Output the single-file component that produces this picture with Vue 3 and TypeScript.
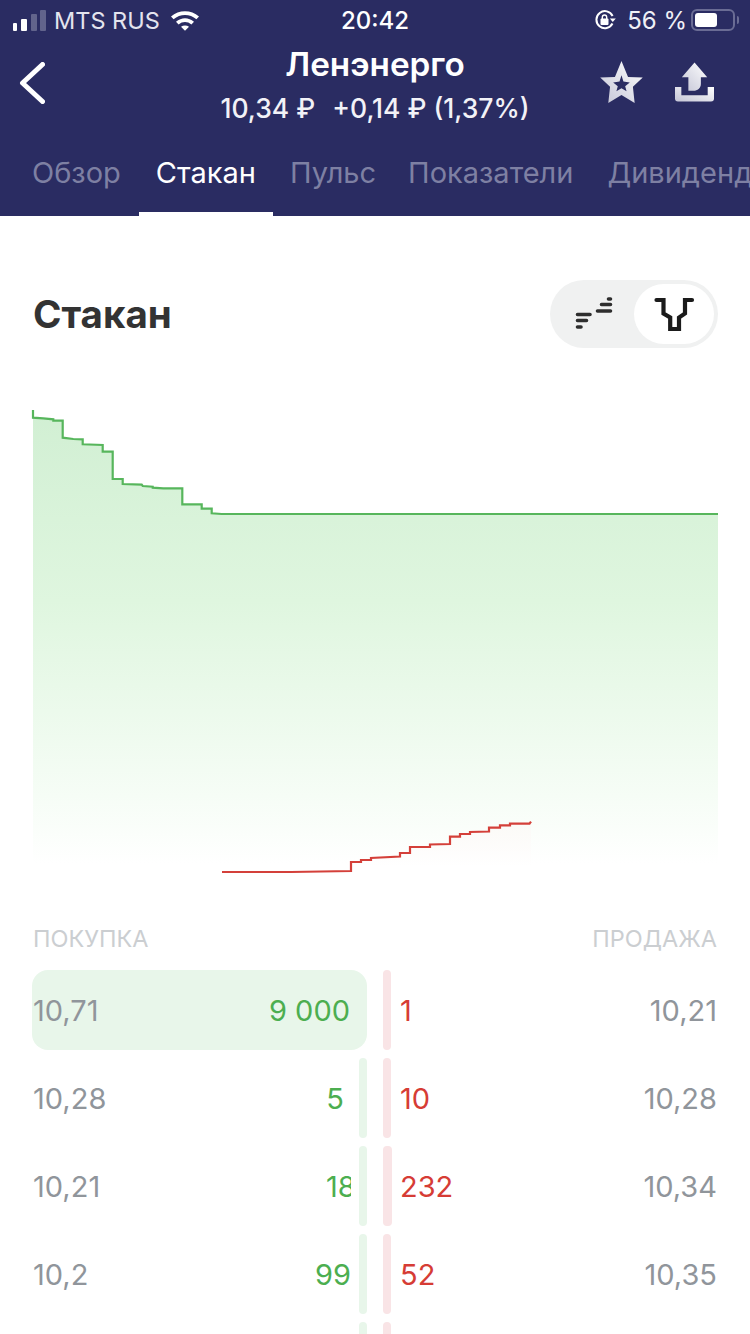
<script setup lang="ts">
interface Row {
  buyPrice: string
  buyQty: string
  sellQty: string
  sellPrice: string
  qtyClass?: string
  sellBarWide?: boolean
}

const tabs = ['Обзор', 'Стакан', 'Пульс', 'Показатели', 'Дивиденды']

// the last row only peeks in at the bottom edge, so just its bars show
const rows: Row[] = [
  { buyPrice: '10,71', buyQty: '9 000', sellQty: '1', sellPrice: '10,21', qtyClass: 'qty-top' },
  { buyPrice: '10,28', buyQty: '5', sellQty: '10', sellPrice: '10,28', qtyClass: 'qty-short' },
  { buyPrice: '10,21', buyQty: '18', sellQty: '232', sellPrice: '10,34', qtyClass: 'qty-clip', sellBarWide: true },
  { buyPrice: '10,2', buyQty: '99', sellQty: '52', sellPrice: '10,35' },
  { buyPrice: '', buyQty: '', sellQty: '', sellPrice: '' },
]

const greenLine =
  'M33 410V417.700L43.300 418.300L53.300 419.300V420.700H62.700V437.700L73.300 439L82.700 439.300V444.300L102.700 445V451.700H112.700V479H122.700V484L141.700 484.700L142.700 486L152.700 486.700V487.700L163.300 488.300H182.300V504.300H201.700V508.700H211.700V513.300L221.700 514H718'
const greenArea = greenLine + 'V866H33Z'
const redLine =
  'M222 872H291L351 871V862H361V860H371V858L400 856.500V853H410V847H430V844.500L450 844V836.700H460V834H470V832L489 831.500V827.700H500V825.300H510V823.700H529.500L531 821.700'
const redArea = redLine + 'V872H222Z'
</script>

<template>
  <div class="page">
    <header class="header">
      <div class="status">
        <div class="status-side">
          <div class="signal">
            <i class="s1"></i><i class="s2"></i><i class="s3"></i><i class="s4"></i>
          </div>
          <span class="carrier">MTS RUS</span>
          <svg class="wifi" width="30" height="22" viewBox="0 0 30 22">
            <path d="M1 7.500C8.800 .5 21.200 .5 29 7.500L26.400 10.300C20 4.500 10 4.500 3.600 10.300Z" fill="#fff" />
            <path d="M6 12.700C11.300 8 18.700 8 24 12.700L21.400 15.500C17.600 12.200 12.400 12.200 8.600 15.500Z" fill="#fff" />
            <path d="M11 17.800C13.400 15.900 16.600 15.900 19 17.800L15 21.800Z" fill="#fff" />
          </svg>
        </div>
        <span class="time">20:42</span>
        <div class="status-side status-right">
          <svg class="lock" width="22" height="22" viewBox="0 0 22 22">
            <path d="M18.500 14.500A8.500 8.500 0 1 1 18.600 7" fill="none" stroke="#fff" stroke-width="2" />
            <path d="M15.800 9.500L21.800 9.500L18.800 13Z" fill="#fff" />
            <rect x="6.500" y="9.500" width="8" height="6.500" rx="1" fill="#fff" />
            <path d="M8.300 10V8.200a2.200 2.200 0 0 1 4.400 0V10" fill="none" stroke="#fff" stroke-width="1.400" />
          </svg>
          <span class="percent">56 %</span>
          <div class="battery"><div class="battery-fill"></div></div>
          <div class="battery-cap"></div>
        </div>
      </div>

      <div class="nav">
        <div class="nav-left">
          <svg width="26" height="42" viewBox="0 0 26 42">
            <path d="M23.500 2.500L3.500 21L23.500 39.500" fill="none" stroke="#fff" stroke-width="5" stroke-linecap="round" stroke-linejoin="round" />
          </svg>
        </div>
        <div class="nav-title">
          <div class="title">Ленэнерго</div>
          <div class="subtitle">10,34 ₽ <span class="change">+0,14 ₽ (1,37%)</span></div>
        </div>
        <div class="nav-right">
          <svg width="44" height="44" viewBox="598 61.500 44 44">
            <defs>
              <linearGradient id="iconFade" x1="0" y1="1" x2="1" y2="0">
                <stop offset="0" stop-color="#c4c5d6" />
                <stop offset="1" stop-color="#ffffff" />
              </linearGradient>
            </defs>
            <path
              fill="url(#iconFade)"
              fill-rule="evenodd"
              d="M620 62L626.700 78.300L641.800 79L631.700 88.300L633.500 105L620 96.700L606.500 105L608.300 88.300L598.200 79L613.300 78.300ZM620 76.500L618 83L611.500 84L616.200 87.800L614.800 93L620 90L625.200 93L623.800 87.800L628.500 84L622 83Z"
            />
          </svg>
          <svg width="40" height="41" viewBox="674 62 40 41">
            <path fill="url(#iconFade)" d="M694 62L707 77H700.500V84C700.500 88 697 91 693 91H687.700V77H681Z" />
            <path fill="url(#iconFade)" d="M674 87H680.500V95.500H707.500V87H714V99A3 3 0 0 1 711 102H677A3 3 0 0 1 674 99Z" />
          </svg>
        </div>
      </div>

      <nav class="tabs">
        <div v-for="(tab, i) in tabs" :key="tab" class="tab" :class="{ active: i === 1 }">{{ tab }}</div>
      </nav>
    </header>

    <main class="content">
      <div class="heading">
        <h2>Стакан</h2>
        <div class="toggle">
          <div class="toggle-item">
            <svg width="40" height="34" viewBox="572 296 40 34">
              <path
                d="M575.500 313.500H588M575.500 319.500H584.500M575.500 326H579M595.500 310H608.500M599.500 303.500H608.500M606.500 298H608.500"
                fill="none"
                stroke="#2e2e2e"
                stroke-width="3.600"
                stroke-linecap="round"
              />
            </svg>
          </div>
          <div class="toggle-item toggle-on">
            <svg width="42" height="34" viewBox="654 297 42 34">
              <path
                d="M657.500 300H664.500V313.500L671.200 317.500V329H680V317.500L686 313.500V300H693"
                fill="none"
                stroke="#1b1b1b"
                stroke-width="4.200"
                stroke-linecap="round"
                stroke-linejoin="miter"
              />
            </svg>
          </div>
        </div>
      </div>

      <svg class="chart" width="750" height="486" viewBox="0 400 750 486">
        <defs>
          <linearGradient id="greenFade" gradientUnits="userSpaceOnUse" x1="0" y1="410" x2="0" y2="864">
            <stop offset="0" stop-color="#d1efd3" />
            <stop offset="0.42" stop-color="#dff6df" />
            <stop offset="0.85" stop-color="#f6fdf6" />
            <stop offset="1" stop-color="#ffffff" />
          </linearGradient>
          <linearGradient id="redFade" gradientUnits="userSpaceOnUse" x1="0" y1="822" x2="0" y2="866">
            <stop offset="0" stop-color="#fbf8f5" stop-opacity="0.6" />
            <stop offset="1" stop-color="#ffffff" />
          </linearGradient>
        </defs>
        <path :d="greenArea" fill="url(#greenFade)" />
        <path :d="greenLine" fill="none" stroke="#57b65c" stroke-width="2.200" />
        <path :d="redArea" fill="url(#redFade)" />
        <path :d="redLine" fill="none" stroke="#d4403a" stroke-width="2.200" />
      </svg>

      <div class="labels">
        <span>ПОКУПКА</span>
        <span>ПРОДАЖА</span>
      </div>

      <div class="book">
        <div v-for="(row, i) in rows" :key="i" class="row">
          <div class="buy" :class="{ 'buy-top': i === 0 }">
            <span class="price">{{ row.buyPrice }}</span>
            <span class="qty-green" :class="row.qtyClass">{{ row.buyQty }}</span>
            <i v-if="i > 0" class="bar bar-green"></i>
          </div>
          <div class="sell">
            <i class="bar bar-red" :class="{ wide: row.sellBarWide }"></i>
            <span class="qty-red">{{ row.sellQty }}</span>
            <span class="price">{{ row.sellPrice }}</span>
          </div>
        </div>
      </div>
    </main>
  </div>
</template>

<style>
html,
body {
  margin: 0;
  background: #fff;
}
</style>

<style scoped>
.page {
  width: 750px;
  height: 1334px;
  overflow: hidden;
  background: #fff;
  font-family: Inter, 'Noto Sans', sans-serif;
}

.header {
  height: 216px;
  background: #2a2c62;
  color: #fff;
  display: flex;
  flex-direction: column;
  overflow: hidden;
}

.status {
  height: 40px;
  display: grid;
  grid-template-columns: 1fr auto 1fr;
  align-items: center;
  font-size: 24px;
  padding: 0 11px 0 13px;
}
.status-side { display: flex; align-items: center; }
.status-right { justify-content: flex-end; }
.signal { display: flex; align-items: flex-end; height: 22px; gap: 4px; }
.signal i { width: 5px; background: #fff; border-radius: 1px; }
.signal .s1 { height: 8px; width: 4px; }
.signal .s2 { height: 12px; width: 6px; }
.signal .s3 { height: 17px; width: 6px; background: #62648c; }
.signal .s4 { height: 21px; width: 6px; background: #62648c; margin-left: -1px; }
.carrier { margin-left: 8px; font-size: 23.500px; color: #e4e4ee; }
.wifi { margin-left: 10px; }
.time { font-weight: 500; margin-left: -2px; }
.percent { margin-left: 11px; color: #f0f0f6; }
.battery {
  width: 44px;
  height: 22px;
  margin-left: 4px;
  box-sizing: border-box;
  border: 2px solid #6a6c94;
  border-radius: 6px;
  padding: 2px;
}
.battery-fill { width: 22px; height: 100%; background: #fff; border-radius: 3px; }
.battery-cap { width: 2px; height: 8px; margin-left: 2px; background: #6a6c94; border-radius: 0 2px 2px 0; }

.nav {
  height: 94px;
  display: grid;
  grid-template-columns: 150px 1fr 150px;
  align-items: center;
}
.nav-left { padding: 0 0 8px 19px; display: flex; }
.nav-title { text-align: center; padding-bottom: 6px; }
.title { font-size: 33.300px; font-weight: 600; line-height: 48px; }
.subtitle { font-size: 26.500px; font-weight: 500; line-height: 40px; color: #f2f2f7; }
.change { margin-left: 10px; }
.nav-right { display: flex; justify-content: flex-end; align-items: center; gap: 32px; padding: 0 36px 10px 0; }

.tabs {
  display: flex;
  padding-left: 15px;
  height: 82px;
  white-space: nowrap;
}
.tab {
  flex: none;
  padding: 0 17px;
  font-size: 29px;
  line-height: 78px;
  color: #7e80a3;
  height: 78px;
}
.tab:first-child { padding-right: 18px; }
.tab:nth-child(3) { padding-right: 15px; }
.tab.active {
  color: #fff;
  border-bottom: 4px solid #fff;
}

.content { padding: 0 32px; }

.heading {
  margin-top: 64px;
  height: 68px;
  display: flex;
  align-items: center;
  justify-content: space-between;
}
.heading h2 {
  margin: 0;
  padding-left: 1px;
  font-size: 38.500px;
  font-weight: 700;
  color: #333;
}
.toggle {
  width: 168px;
  height: 68px;
  box-sizing: border-box;
  padding: 4px;
  border-radius: 34px;
  background: #f0f1f1;
  display: flex;
  justify-content: space-between;
}
.toggle-item {
  width: 80px;
  height: 60px;
  display: flex;
  align-items: center;
  justify-content: center;
  border-radius: 30px;
}
.toggle-item svg { display: block; }
.toggle-on { background: #fff; }

.chart {
  display: block;
  margin: 52px 0 0 -32px;
}

.labels {
  display: flex;
  justify-content: space-between;
  height: 46px;
  padding: 0 1px;
  margin-top: 38px;
  font-size: 23.500px;
  line-height: 30px;
  color: #cbced1;
}

.book {
  display: flex;
  flex-direction: column;
  gap: 8px;
  font-size: 29px;
}
.row {
  flex: none;
  height: 80px;
  display: grid;
  grid-template-columns: 335px 335px;
  column-gap: 16px;
}
.buy,
.sell {
  display: flex;
  align-items: center;
  min-width: 0;
}
.price { color: #90959b; padding-left: 1px; }
.buy-top {
  background: #e8f6ea;
  border-radius: 16px;
}
.buy .price { flex: 1; }
.qty-green {
  color: #4cae50;
  width: 78px;
  margin-left: auto;
  padding-right: 8px;
  text-align: right;
  overflow: hidden;
  white-space: nowrap;
  box-sizing: border-box;
}
.qty-top { width: auto; padding-right: 17px; }
.qty-short { padding-right: 15px; }
.qty-clip { width: 25px; margin-right: 8px; padding-right: 0; text-align: left; }
.bar {
  flex: none;
  width: 8px;
  height: 80px;
  border-radius: 4px;
}
.bar-green { background: #e8f6ea; }
.bar-red { background: #f9e4e6; }
.bar-red.wide { width: 9px; }
.sell .price { margin-left: auto; padding-right: 1px; }
.qty-red { color: #d63c35; margin-left: 9px; }
.wide + .qty-red { margin-left: 8px; }
</style>
